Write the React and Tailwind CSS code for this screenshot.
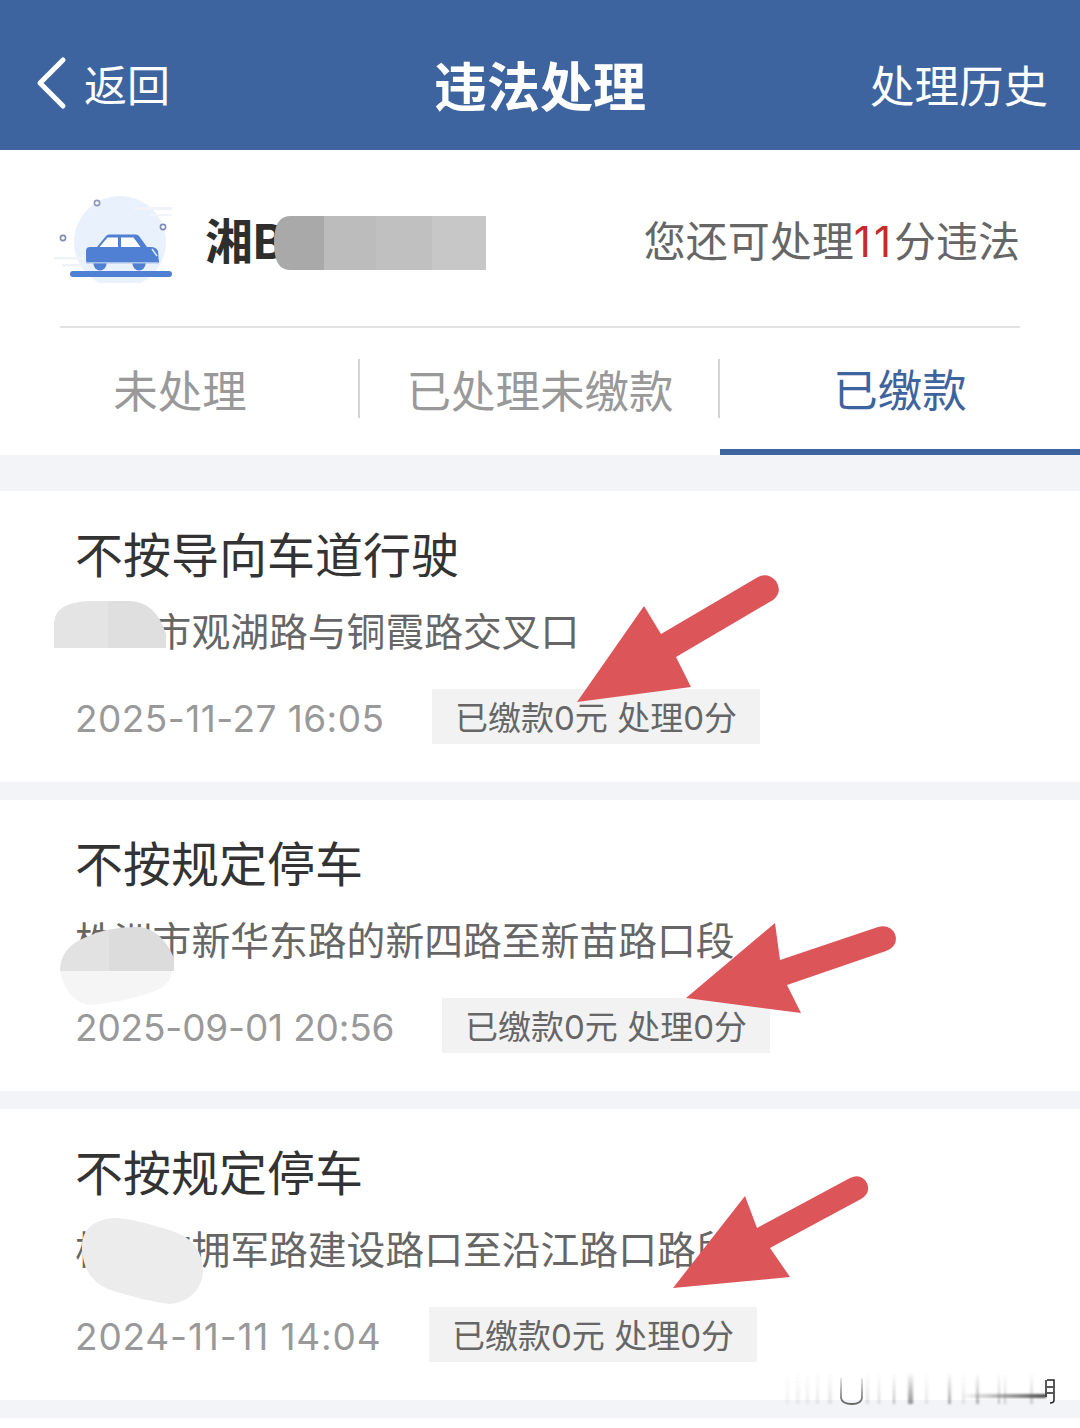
const FONT = "font-['Inter','Noto_Sans_CJK_SC','Noto_Sans',sans-serif]";

function CarIcon() {
  return (
    <svg width="124" height="90" viewBox="52 194 124 90" className="shrink-0">
      <circle cx="120" cy="243" r="46" fill="#e9f1fc" />
      <rect x="134" y="208" width="38" height="3" fill="#f0f4fa" />
      <rect x="150" y="215" width="22" height="2" fill="#f2f5fa" />
      <rect x="54" y="258" width="34" height="2.500" fill="#eef3fa" />
      <rect x="62" y="265" width="24" height="2.500" fill="#eef3fa" />
      <circle cx="97" cy="204" r="2.600" fill="#fff" stroke="#8e96bc" strokeWidth="1.600" />
      <circle cx="163" cy="228" r="2.600" fill="#fff" stroke="#7f8db5" strokeWidth="1.600" />
      <circle cx="63" cy="239" r="2.600" fill="#fff" stroke="#7f8db5" strokeWidth="1.600" />
      <rect x="70" y="272" width="102" height="6" rx="3" fill="#4f80d3" />
      <circle cx="100" cy="265" r="6.500" fill="#4f80d3" />
      <circle cx="139" cy="265" r="6.500" fill="#4f80d3" />
      <path d="M86 252q0-4 4-4h7l9-11q1-1.500 3-1.500h27q2 0 3 1.500l8 11h4q5 0 7 4l1 12H89q-3 0-3-3z" fill="#4f80d3" />
      <path d="M99.500 248l8-9.500h10.500V248zM121 238.500h12.500l7 9.500H121z" fill="#ffffff" />
      <path d="M152 250l5 7" stroke="#dfe9f8" strokeWidth="1.500" fill="none" />
      <rect x="86" y="263" width="72" height="1.500" fill="#a9c0e6" />
    </svg>
  );
}

function Overlays() {
  const lines = [
    [786, 3, 0.08], [796, 4, 0.1], [806, 3, 0.12], [816, 3, 0.14], [828, 4, 0.16],
    [866, 3, 0.2], [878, 2, 0.25], [893, 2, 0.45], [908, 5, 0.7], [925, 3, 0.15],
    [948, 3, 0.55], [962, 3, 0.15], [976, 3, 0.5], [998, 2, 0.4], [1004, 2, 0.3], [1030, 3, 0.3],
  ];
  return (
    <svg width="1080" height="1428" viewBox="0 0 1080 1428" className="absolute left-0 top-0 pointer-events-none">
      <defs>
        <clipPath id="plate"><path d="M290 216H486V270H290Q274 270 274 243Q274 216 290 216Z" /></clipPath>
        <clipPath id="s1"><path d="M54 648V622Q56 602 90 601H130Q156 602 166 634V648Z" /></clipPath>
        <clipPath id="s2"><path d="M60 971Q60 948 84 938Q108 926 140 927Q162 930 174 958V971Z" /></clipPath>
        <clipPath id="s2b"><path d="M60 971H172Q172 985 150 993Q120 1003 88 1005Q66 1000 60 971Z" /></clipPath>
        <linearGradient id="fade" gradientUnits="userSpaceOnUse" x1="0" y1="1372" x2="0" y2="1404">
          <stop offset="0" stopColor="#555" stopOpacity="0" />
          <stop offset="1" stopColor="#555" stopOpacity="0.9" />
        </linearGradient>
        <linearGradient id="fadeH" gradientUnits="userSpaceOnUse" x1="960" y1="0" x2="1046" y2="0">
          <stop offset="0" stopColor="#555" stopOpacity="0" />
          <stop offset="1" stopColor="#333" stopOpacity="0.9" />
        </linearGradient>
        <filter id="soft" x="-5%" y="-20%" width="110%" height="140%"><feGaussianBlur stdDeviation="1" /></filter>
      </defs>
      <g clipPath="url(#plate)">
        <rect x="270" y="216" width="54" height="54" fill="#a9a9a9" />
        <rect x="324" y="216" width="52" height="54" fill="#bcbcbc" />
        <rect x="376" y="216" width="56" height="54" fill="#c0c0c0" />
        <rect x="432" y="216" width="54" height="54" fill="#c7c7c7" />
      </g>
      <rect x="54" y="648" width="112" height="14" fill="#ffffff" />
      <g clipPath="url(#s1)">
        <rect x="54" y="600" width="54" height="48" fill="#e4e4e4" />
        <rect x="108" y="600" width="60" height="48" fill="#dfdfdf" />
      </g>
      <g clipPath="url(#s2)">
        <rect x="58" y="925" width="51" height="46" fill="#e2e2e2" />
        <rect x="109" y="925" width="66" height="46" fill="#dcdcdc" />
      </g>
      <rect x="58" y="971" width="116" height="36" fill="#f5f5f5" clipPath="url(#s2b)" />
      <path d="M82 1250Q80 1222 112 1218Q130 1217 175 1232Q203 1242 203 1272Q200 1300 170 1304Q150 1302 110 1290Q84 1280 82 1250Z" fill="#ececec" />
      <path d="M577 702L644 606L661 634L758 577Q768 572 776 581Q783 592 773 600L676 657L691 687Z" fill="#dc5559" />
      <path d="M686 998L775 923L780 960L878 927Q890 924 895 934Q899 946 886 951L787 985L801 1013Z" fill="#dc5559" />
      <path d="M673 1288L745 1196L757 1228L850 1178Q861 1173 867 1183Q871 1193 861 1199L770 1248L790 1277Z" fill="#dc5559" />
      <g filter="url(#soft)">
        {lines.map(([x, w, o]) => (
          <rect key={x} x={x} y="1374" width={w} height="30" fill="url(#fade)" opacity={o} />
        ))}
        <rect x="960" y="1394" width="86" height="4" fill="url(#fadeH)" />
      </g>
      <path d="M841 1378V1398Q842 1404 852 1404Q861 1404 862 1398V1378" fill="none" stroke="url(#fade)" strokeWidth="1.800" />
      <path d="M1047 1380H1054V1400Q1054 1403 1050 1403M1047 1387H1053M1047 1393H1053M1046 1380V1397" fill="none" stroke="#222" strokeWidth="1.500" />
    </svg>
  );
}

function Card({ title, address, date, dateClass }) {
  return (
    <section className="h-[291px] bg-white pl-[75px] pt-[36px]">
      <h2 className="h-[58px] text-[48px] leading-[58px] font-normal text-[#333333]">{title}</h2>
      <p className="mt-[23px] h-[48px] text-[38.800px] leading-[48px] text-[#666666]">{address}</p>
      <div className="mt-[33px] flex h-[55px] items-center">
        <span className={`${dateClass} pt-[4px] text-[37px] text-[#999999]`}>{date}</span>
        <span className="flex h-[55px] w-[328px] items-center justify-center bg-[#f2f2f2] pt-[4px] text-[33px] text-[#666666]">
          已缴款0元 处理0分
        </span>
      </div>
    </section>
  );
}

export default function App() {
  return (
    <div className={`relative h-[1428px] w-[1080px] overflow-hidden bg-white ${FONT}`}>
      <header className="grid h-[150px] grid-cols-[1fr_auto_1fr] items-center bg-[#3e64a0] pt-[16px] text-white">
        <div className="flex items-center pl-[34px]">
          <svg width="34" height="54" viewBox="0 0 34 54" className="shrink-0">
            <path d="M29 4L6 27L29 50" fill="none" stroke="#ffffff" strokeWidth="5" strokeLinecap="round" strokeLinejoin="round" />
          </svg>
          <span className="ml-[16px] pt-[6px] text-[43px] leading-none">返回</span>
        </div>
        <h1 className="pt-[10px] text-[53px] leading-none font-bold">违法处理</h1>
        <div className="pr-[32px] pt-[8px] text-right text-[44.500px] leading-none">处理历史</div>
      </header>

      <div className="bg-white">
        <div className="mx-[60px] flex h-[178px] items-center justify-between border-b-2 border-[#e2e2e2]">
          <div className="-ml-[8px] flex items-center">
            <CarIcon />
            <span className="ml-[29px] pt-[8px] text-[48px] font-bold leading-none text-[#2e2e2e]">湘B</span>
          </div>
          <div className="pt-[8px] text-[42px] leading-none text-[#666666]">
            您还可处理<span className="tracking-[3px] text-[#c62a2a]">11</span>分违法
          </div>
        </div>
        <nav className="flex h-[127px] text-[44.500px] leading-none">
          <div className="relative flex flex-1 items-center justify-center pt-[2px] text-[#999999]">
            未处理
            <span className="absolute right-0 top-[31px] h-[59px] w-[2px] bg-[#d4d4d4]" />
          </div>
          <div className="relative flex flex-1 items-center justify-center pt-[2px] text-[#999999]">
            已处理未缴款
            <span className="absolute right-0 top-[31px] h-[59px] w-[2px] bg-[#d4d4d4]" />
          </div>
          <div className="flex flex-1 items-center justify-center border-b-[6px] border-[#3e64a0] pt-[6px] text-[#3e64a0]">
            已缴款
          </div>
        </nav>
      </div>

      <div className="flex flex-col gap-[18px] bg-[#f3f4f8] pt-[36px] pb-[18px]">
        <Card title="不按导向车道行驶" address="株洲市观湖路与铜霞路交叉口" date="2025-11-27 16:05" dateClass="w-[357px] tracking-[0.45px]" />
        <Card title="不按规定停车" address="株洲市新华东路的新四路至新苗路口段" date="2025-09-01 20:56" dateClass="w-[367px] tracking-[-0.17px]" />
        <Card title="不按规定停车" address="株洲市拥军路建设路口至沿江路口路段" date="2024-11-11 14:04" dateClass="w-[354px] tracking-[0.82px]" />
      </div>

      <Overlays />
    </div>
  );
}
